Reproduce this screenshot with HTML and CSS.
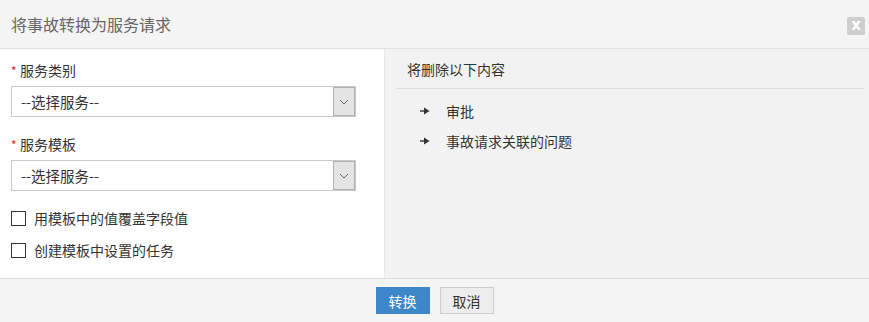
FILE: index.html
```html
<!doctype html>
<html>
<head>
  <meta charset="utf-8">
  <title>将事故转换为服务请求</title>
  <link rel="stylesheet" href="styles.css">
</head>
<body>

  <div class="dialog">
    <div class="dialog-head">
      <span class="dialog-title">将事故转换为服务请求</span>
      <span class="close-btn">x</span>
    </div>

    <div class="dialog-body">
      <div class="form-side">
        <div class="field">
          <label class="field-label"><span class="req">*</span>服务类别</label>
          <div class="select-box">
            <span class="select-text">--选择服务--</span>
            <span class="select-arrow">
              <svg width="10" height="6" viewBox="0 0 10 6"><path d="M1 1 L5 5 L9 1" fill="none" stroke="#666" stroke-width="1"/></svg>
            </span>
          </div>
        </div>
        <div class="field">
          <label class="field-label"><span class="req">*</span>服务模板</label>
          <div class="select-box">
            <span class="select-text">--选择服务--</span>
            <span class="select-arrow">
              <svg width="10" height="6" viewBox="0 0 10 6"><path d="M1 1 L5 5 L9 1" fill="none" stroke="#666" stroke-width="1"/></svg>
            </span>
          </div>
        </div>
        <div class="checks">
          <label class="check-row"><span class="check-box"></span>用模板中的值覆盖字段值</label>
          <label class="check-row"><span class="check-box"></span>创建模板中设置的任务</label>
        </div>
      </div>

      <div class="info-side">
        <div class="info-title">将删除以下内容</div>
        <ul class="info-list">
          <li>
            <svg class="arrow" width="10" height="8" viewBox="0 0 10 8"><path d="M0 4 H5" stroke="#333" stroke-width="1.4"/><path d="M4 0.5 L9.5 4 L4 7.5 Z" fill="#333"/></svg>
            审批
          </li>
          <li>
            <svg class="arrow" width="10" height="8" viewBox="0 0 10 8"><path d="M0 4 H5" stroke="#333" stroke-width="1.4"/><path d="M4 0.5 L9.5 4 L4 7.5 Z" fill="#333"/></svg>
            事故请求关联的问题
          </li>
        </ul>
      </div>
    </div>

    <div class="dialog-foot">
      <button type="button" class="btn btn-primary">转换</button>
      <button type="button" class="btn btn-default">取消</button>
    </div>
  </div>

</body>
</html>
```

FILE: styles.css
```css
body {
  margin: 0;
  font-family: "Noto Sans CJK SC", "Liberation Sans", sans-serif;
  font-size: 14px;
  color: #333;
  background: #fff;
}
.dialog {
  width: 869px;
  height: 322px;
  display: flex;
  flex-direction: column;
}
.dialog-head {
  height: 48px;
  background: #f4f4f4;
  border-bottom: 1px solid #e0e0e0;
  display: flex;
  align-items: center;
  justify-content: space-between;
  padding: 0 4px 0 11px;
}
.dialog-title {
  font-size: 16px;
  color: #666;
}
.close-btn {
  width: 18px;
  height: 18px;
  margin-top: 4px;
  background: #cfcfcf;
  border-radius: 2px;
  color: #fff;
  font-family: "DejaVu Sans", sans-serif;
  font-weight: bold;
  font-size: 15px;
  line-height: 16px;
  text-align: center;
}
.dialog-body {
  display: flex;
  height: 229px;
}
.form-side {
  width: 373px;
  padding: 11px 0 0 11px;
  background: #fff;
}
.field {
  margin-bottom: 17px;
}
.field-label {
  display: block;
  line-height: 20px;
  margin-bottom: 5px;
}
.req {
  color: #e02020;
  font-size: 12px;
  display: inline-block;
  width: 9px;
}
.select-box {
  width: 343px;
  height: 29px;
  border: 1px solid #c8c8c8;
  display: flex;
  align-items: center;
  justify-content: space-between;
}
.select-text {
  padding-left: 9px;
  font-size: 14.5px;
}
.select-arrow {
  width: 20px;
  height: 27px;
  background: #e4e4e4;
  border: 1px solid #b0b0b0;
  display: flex;
  align-items: center;
  justify-content: center;
}
.checks {
  padding-top: 0;
}
.check-row {
  display: flex;
  align-items: center;
  line-height: 20px;
  margin-bottom: 12px;
}
.check-box {
  width: 13px;
  height: 13px;
  border: 1px solid #333;
  margin-right: 8px;
  background: #fff;
}
.info-side {
  flex: 1;
  background: #f2f2f2;
  border-left: 1px solid #e8e8e8;
  padding: 0 5px 0 11px;
}
.info-title {
  padding: 10px 0 9px 11px;
  line-height: 20px;
  border-bottom: 1px solid #dcdcdc;
}
.info-list {
  list-style: none;
  margin: 12px 0 0 0;
  padding: 0 0 0 24px;
}
.info-list li {
  line-height: 20px;
  margin-bottom: 10px;
  display: flex;
  align-items: center;
}
.arrow {
  margin-right: 16px;
}
.dialog-foot {
  flex: 1;
  background: #f4f4f4;
  border-top: 1px solid #dcdcdc;
  display: flex;
  justify-content: center;
  align-items: flex-start;
  padding-top: 8px;
  gap: 10px;
}
.btn {
  width: 54px;
  height: 27px;
  font-family: "Noto Sans CJK SC", sans-serif;
  font-size: 14px;
  border-radius: 0;
  padding: 0;
  cursor: pointer;
}
.btn-primary {
  background: #3d87c9;
  border: 1px solid #3d87c9;
  color: #fff;
}
.btn-default {
  background: #eeeeee;
  border: 1px solid #cccccc;
  color: #333;
}
```
